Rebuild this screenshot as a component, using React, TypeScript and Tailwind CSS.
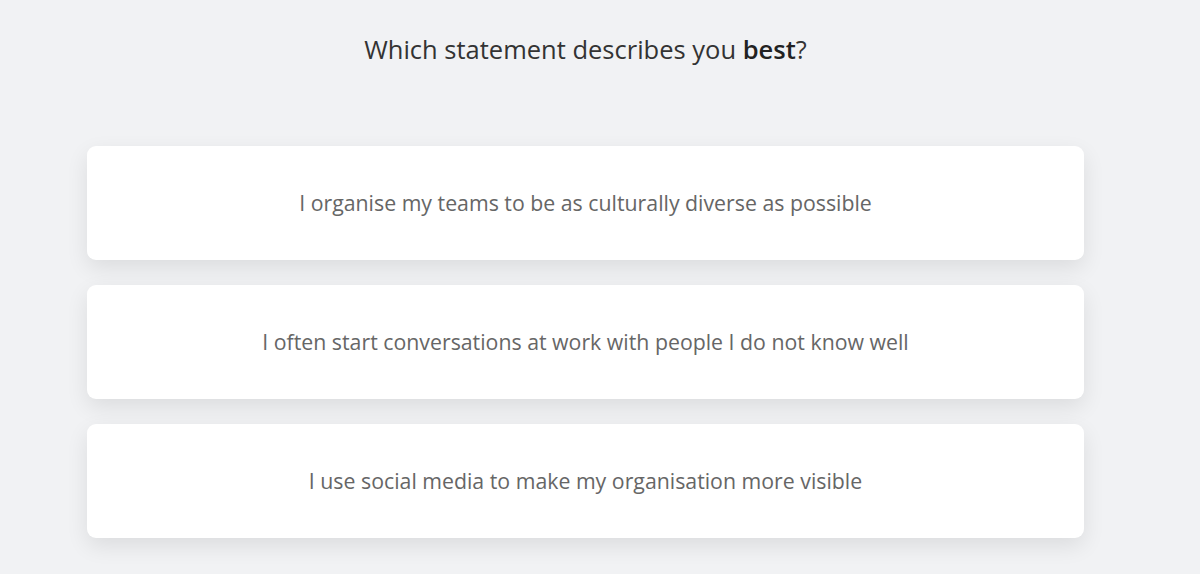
import React from 'react';

const options = [
  'I organise my teams to be as culturally diverse as possible',
  'I often start conversations at work with people I do not know well',
  'I use social media to make my organisation more visible',
];

const App: React.FC = () => {
  return (
    <div className="min-h-[574px] bg-[#f1f2f4] font-['Open_Sans',sans-serif]">
      <div className="ml-[87px] w-[997px] pt-[31px]">
        <h1 className="text-center text-[25.5px] leading-[36px] text-[#333]">
          Which statement describes you <span className="font-semibold text-[#222]">best</span>?
        </h1>
        <div className="mt-[79px] flex flex-col gap-[25px]">
          {options.map((text) => (
            <button
              key={text}
              className="flex h-[114px] items-center justify-center rounded-[9px] bg-white text-[21.3px] text-[#666] shadow-[0_8px_22px_rgba(0,0,0,0.09)]"
            >
              {text}
            </button>
          ))}
        </div>
      </div>
    </div>
  );
};

export default App;
